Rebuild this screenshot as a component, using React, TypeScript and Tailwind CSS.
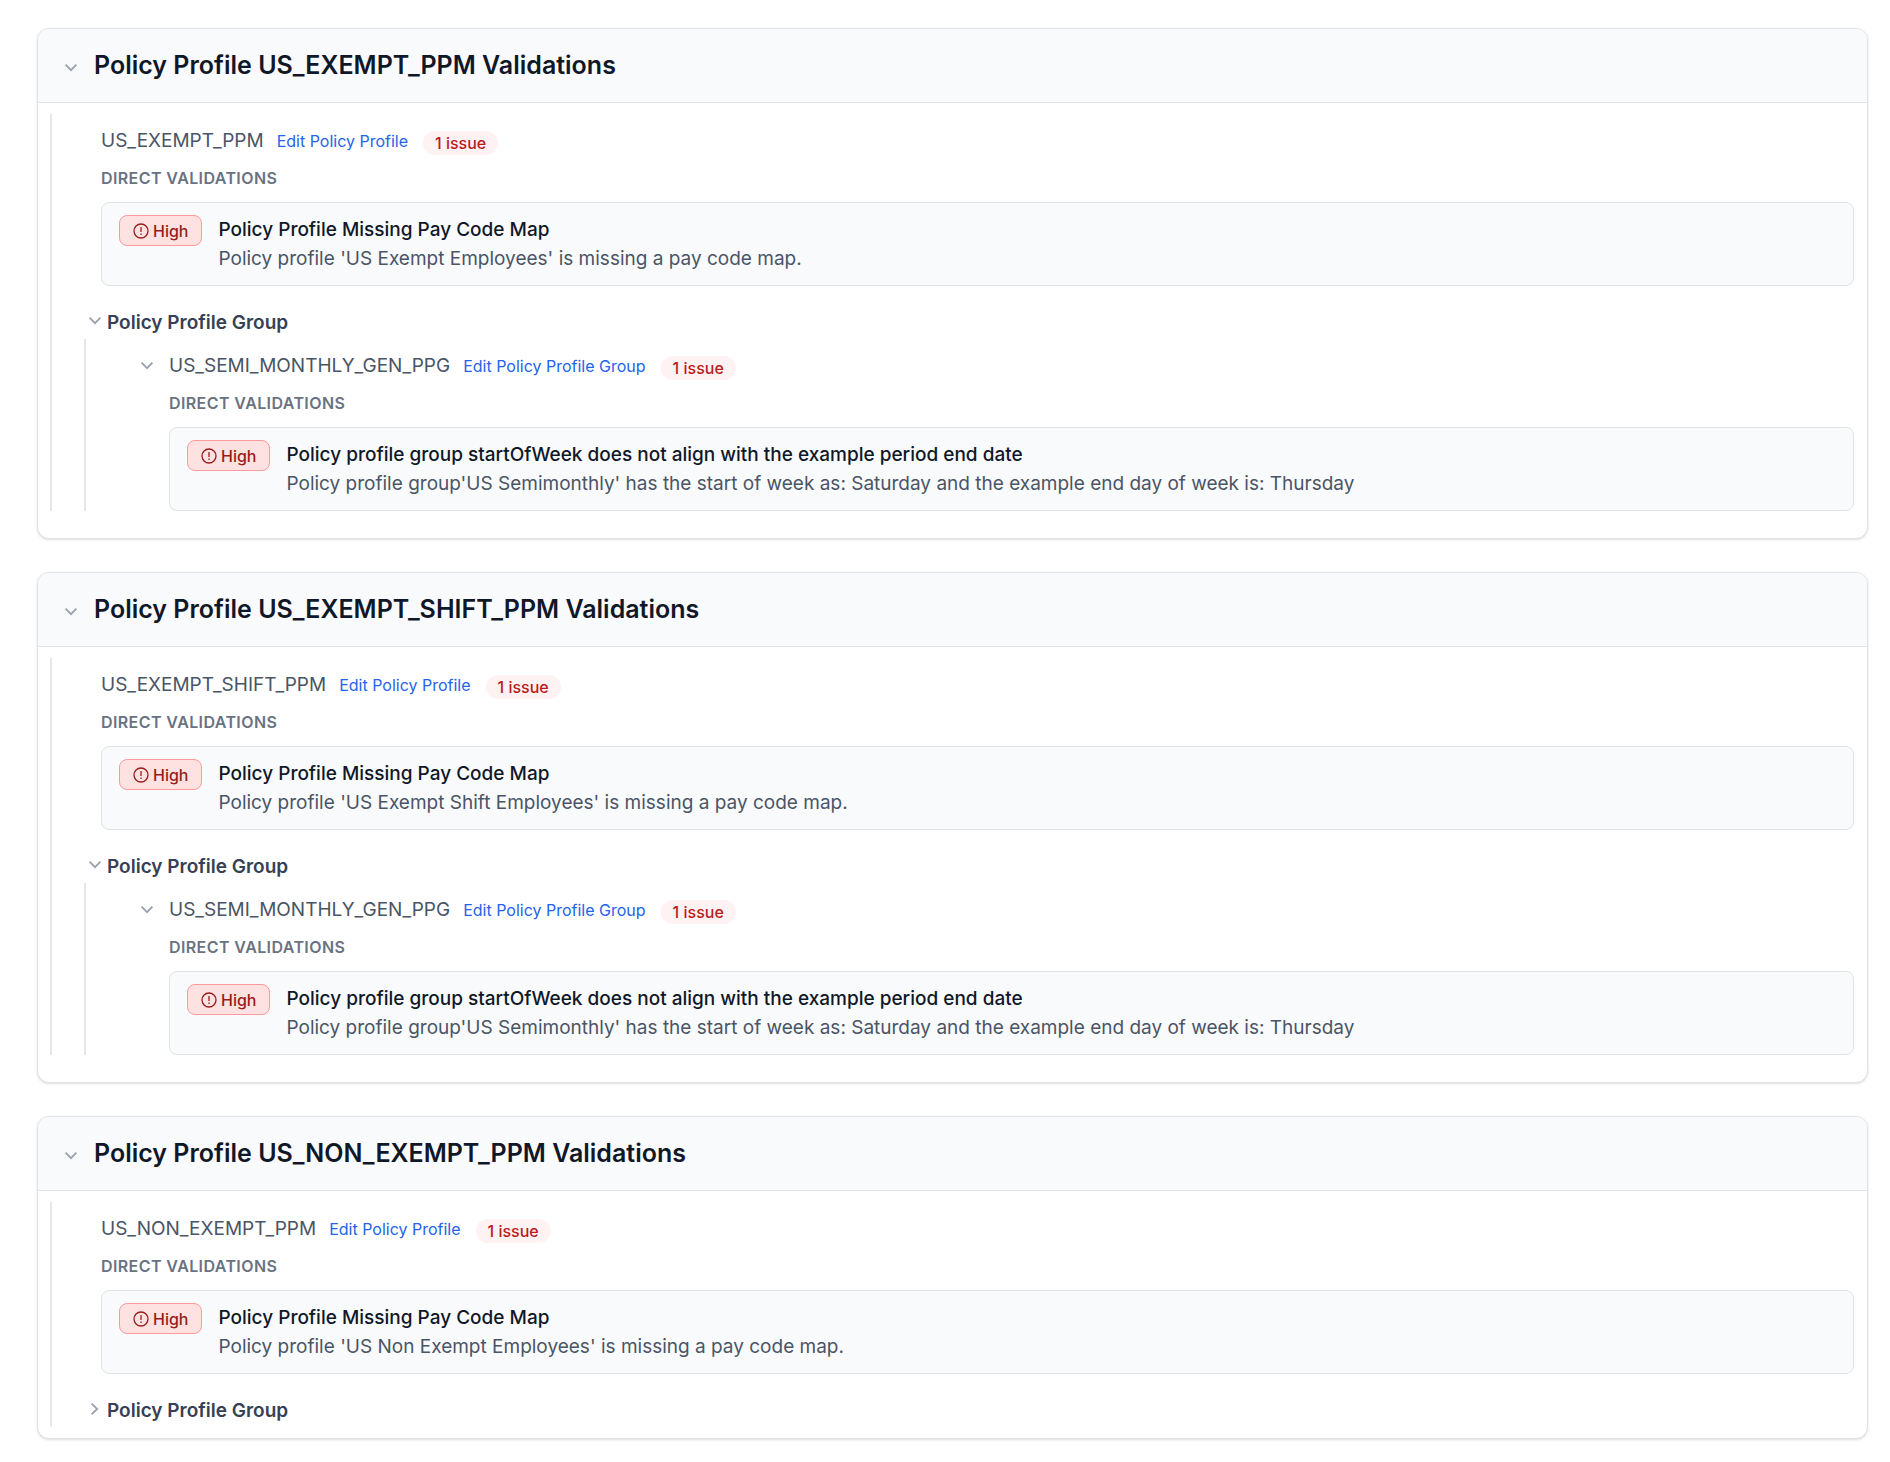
import { useState } from 'react';
import type { ReactNode } from 'react';

interface Validation {
  title: string;
  description: string;
}

interface Profile {
  code: string;
  validation: Validation;
  groupOpen: boolean;
}

const profiles: Profile[] = [
  {
    code: 'US_EXEMPT_PPM',
    validation: {
      title: 'Policy Profile Missing Pay Code Map',
      description: "Policy profile 'US Exempt Employees' is missing a pay code map.",
    },
    groupOpen: true,
  },
  {
    code: 'US_EXEMPT_SHIFT_PPM',
    validation: {
      title: 'Policy Profile Missing Pay Code Map',
      description: "Policy profile 'US Exempt Shift Employees' is missing a pay code map.",
    },
    groupOpen: true,
  },
  {
    code: 'US_NON_EXEMPT_PPM',
    validation: {
      title: 'Policy Profile Missing Pay Code Map',
      description: "Policy profile 'US Non Exempt Employees' is missing a pay code map.",
    },
    groupOpen: false,
  },
];

const groupValidation: Validation = {
  title: 'Policy profile group startOfWeek does not align with the example period end date',
  description:
    "Policy profile group'US Semimonthly' has the start of week as: Saturday and the example end day of week is: Thursday",
};

function Chevron({ open }: { open: boolean }) {
  return (
    <svg
      aria-hidden="true"
      className={`size-4 text-gray-400 ${open ? '' : '-rotate-90'}`}
      fill="none"
      stroke="currentColor"
      strokeWidth="1.8"
      viewBox="0 0 16 16"
    >
      <path d="M2.6 4.6 8 10.2 13.4 4.6" />
    </svg>
  );
}

function ValidationBox({ title, description }: Validation) {
  return (
    <div className="mt-3 flex items-start gap-4 rounded-lg border border-[#dfe2e7] bg-[#f9fafc] px-[17px] py-3">
      <span className="flex h-[31px] shrink-0 items-center gap-1 rounded-lg border border-[#fb9a9a] bg-[#fee2e2] px-[13px] text-base font-medium text-[#991b1b]">
        <svg aria-hidden="true" className="size-4" fill="none" stroke="currentColor" strokeWidth="1.3" viewBox="0 0 16 16">
          <circle cx="8" cy="8" r="7" />
          <path d="M8 4v5M8 10.5v1.5" />
        </svg>
        High
      </span>
      <div className="leading-[29px]">
        <p className="text-[19px] font-medium text-gray-900">{title}</p>
        <p className="text-[19px] text-gray-600">{description}</p>
      </div>
    </div>
  );
}

function ItemHeader({ code, link, children }: { code: string; link: string; children?: ReactNode }) {
  return (
    <div className="flex h-7 items-center">
      {children}
      <span className="text-[19px] text-gray-600">{code}</span>
      <a className="ml-[13px] text-base text-[#2563eb] hover:underline" href="#edit">
        {link}
      </a>
      <span className="mt-1 ml-[15px] rounded-full bg-[#fef2f2] px-3 text-base font-medium text-[#b91c1c]">1 issue</span>
    </div>
  );
}

function DirectLabel() {
  return <h4 className="mt-[11px] text-base font-semibold tracking-wide text-gray-500">DIRECT VALIDATIONS</h4>;
}

function ProfileCard({ code, validation, groupOpen }: Profile) {
  const [open, setOpen] = useState(true);
  const [group, setGroup] = useState(groupOpen);
  const [item, setItem] = useState(true);

  return (
    <section className="overflow-hidden rounded-xl border border-[#dfe2e7] bg-white shadow-sm">
      <h2 className={`bg-[#f9fafc] ${open ? 'border-b border-[#dfe2e7]' : ''}`}>
        <button
          aria-expanded={open}
          className="flex h-[73px] w-full items-center gap-[15px] px-[25px] text-left text-[25px] font-semibold text-gray-900"
          onClick={() => setOpen(!open)}
          type="button"
        >
          <span className="shrink-0 pt-1">
            <Chevron open={open} />
          </span>
          Policy Profile {code} Validations
        </button>
      </h2>
      {open && (
        <div className={`pt-[11px] pr-[13px] pl-3 ${group ? 'pb-[27px]' : 'pb-[11px]'}`}>
          <div className="border-l-2 border-gray-200 pt-[13px]">
            <div className="pl-[49px]">
              <ItemHeader code={code} link="Edit Policy Profile" />
              <DirectLabel />
              <ValidationBox {...validation} />
            </div>
            <h3 className="mt-[23px] pb-[2px] pl-[35px]">
              <button
                aria-expanded={group}
                className="flex h-7 items-center gap-1 text-[19px] font-semibold text-gray-700"
                onClick={() => setGroup(!group)}
                type="button"
              >
                <span className="shrink-0 pb-1">
                  <Chevron open={group} />
                </span>
                Policy Profile Group
              </button>
            </h3>
            {group && (
              <div className="ml-8 border-l-2 border-gray-200 pt-[13px] pl-[83px]">
                <ItemHeader code="US_SEMI_MONTHLY_GEN_PPG" link="Edit Policy Profile Group">
                  <button
                    aria-expanded={item}
                    aria-label="Toggle US_SEMI_MONTHLY_GEN_PPG"
                    className="-ml-[30px] mr-[14px]"
                    onClick={() => setItem(!item)}
                    type="button"
                  >
                    <Chevron open={item} />
                  </button>
                </ItemHeader>
                {item && (
                  <>
                    <DirectLabel />
                    <ValidationBox {...groupValidation} />
                  </>
                )}
              </div>
            )}
          </div>
        </div>
      )}
    </section>
  );
}

export default function App() {
  return (
    <main className="flex min-h-screen flex-col gap-[33px] bg-white pt-7 pr-[22px] pb-6 pl-[37px] font-['Inter',sans-serif]">
      {profiles.map((profile) => (
        <ProfileCard key={profile.code} {...profile} />
      ))}
    </main>
  );
}
